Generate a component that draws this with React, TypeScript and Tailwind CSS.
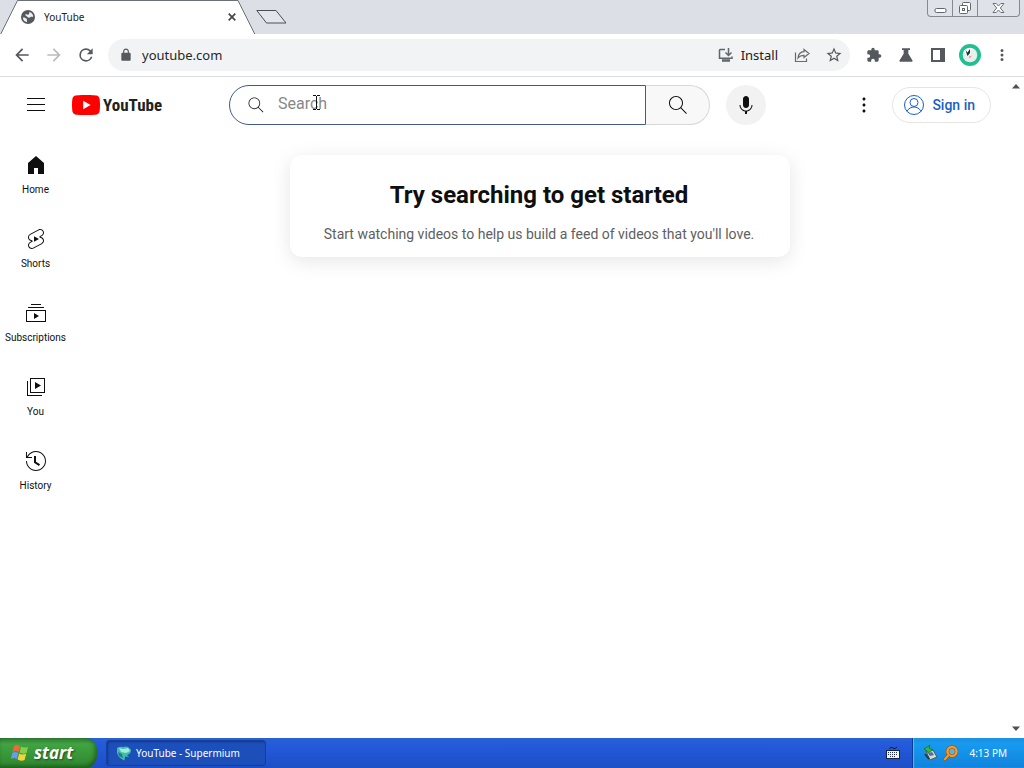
import React, { type ReactNode } from "react";

const ui = "font-['Noto_Sans',sans-serif]";

function Globe() {
  return (
    <svg width="14" height="14" viewBox="0 0 14 14" aria-hidden="true">
      <circle cx="7" cy="7" r="7" fill="#55595e" />
      <path d="M1.800 7.500c1.700 0 3 .3 3.800 1.200.7.800.2 2.100.4 3.500A5.300 5.300 0 0 1 1.800 7.500zM4.200 4.600C5.500 3.800 6.300 5 7.500 4.600c1-.4.300-1.700 1.200-2.600 2 .7 3.400 2.500 3.500 4.600-.9.700-2-.2-3 .7-.9.700-2.300.4-3-.5-.6-.8-2-.8-2-2.200z" fill="#eef0f2" />
    </svg>
  );
}

function TitleBar() {
  return (
    <div className="flex h-[34px] items-start bg-[#dcdfe6]">
      <div className="relative flex h-[34px] w-64 items-center pl-[21px] pr-[19px]">
        <svg className="absolute inset-0" width="256" height="34" viewBox="0 0 256 34" aria-hidden="true">
          <path d="M0.500 34.500L17.500 0.500H238L255 34.500" fill="#fff" stroke="#6b6f76" />
        </svg>
        <div className="relative flex w-full items-center">
          <Globe />
          <span className={`${ui} ml-[9px] flex-1 text-[10px] leading-4 text-[#222]`}>YouTube</span>
          <button aria-label="Close tab" className="flex h-4 w-[10px] items-center justify-center">
            <svg width="8" height="8" viewBox="0 0 8 8"><path d="M.7.7l6.600 6.600M7.300.7L.7 7.300" stroke="#44474b" strokeWidth="1.700" /></svg>
          </button>
        </div>
      </div>
      <button aria-label="New tab" className="mt-[9px]">
        <svg width="31" height="15" viewBox="0 0 31 15" className="block"><path d="M.8 1.500H20L30 14H10.500z" fill="#e2e5ea" stroke="#4b4e54" /></svg>
      </button>
      <div className="ml-auto mr-1 flex h-[17px] rounded-b border border-t-0 border-[#858a92] bg-[#dfe2e8]">
        <button aria-label="Minimize" className="flex w-[25px] items-center justify-center border-r border-[#858a92]">
          <svg width="13" height="16" viewBox="0 0 13 16"><rect x="1" y="8.500" width="11" height="4" rx="1.500" fill="#fff" stroke="#62666d" /></svg>
        </button>
        <button aria-label="Restore" className="flex w-[25px] items-center justify-center border-r border-[#858a92]">
          <svg width="14" height="16" viewBox="0 0 14 16" fill="#fff" stroke="#62666d"><rect x="4.500" y="2.500" width="8" height="8" rx="1" /><rect x="1.500" y="5.500" width="8" height="8" rx="1" /><rect x="4.500" y="8.500" width="2" height="2" /></svg>
        </button>
        <button aria-label="Close" className="flex w-[41px] items-center justify-center">
          <svg width="13" height="16" viewBox="0 0 13 16"><path d="M1 3.500h3.200L6.500 6l2.300-2.500H12L8.300 8l3.700 4.500H8.800L6.500 10l-2.300 2.500H1L4.700 8z" fill="#fff" stroke="#6c7077" /></svg>
        </button>
      </div>
    </div>
  );
}

function IconButton({ label, children, className = "" }: { label: string; children: ReactNode; className?: string }) {
  return (
    <button aria-label={label} className={`flex h-8 w-8 shrink-0 items-center justify-center ${className}`}>{children}</button>
  );
}

function M({ d, size = 18, color = "#55585d" }: { d: string; size?: number; color?: string }) {
  return <svg width={size} height={size} viewBox="0 0 24 24" fill={color}><path d={d} /></svg>;
}

function Toolbar() {
  return (
    <div className="flex h-[43px] items-center border-b border-[#dadce0] bg-white pl-[6px] pr-[6px]">
      <IconButton label="Back"><M size={20} d="M20 11H7.830l5.590-5.590L12 4l-8 8 8 8 1.410-1.410L7.830 13H20v-2z" /></IconButton>
      <IconButton label="Forward"><M size={20} color="#babcbe" d="M12 4l-1.410 1.410L16.170 11H4v2h12.170l-5.580 5.590L12 20l8-8z" /></IconButton>
      <IconButton label="Reload"><M size={20} d="M17.650 6.350A7.960 7.960 0 0 0 12 4a8 8 0 1 0 7.730 10h-2.080A6 6 0 1 1 12 6c1.660 0 3.140.69 4.220 1.780L13 11h7V4l-2.350 2.350z" /></IconButton>
      <div className="ml-[6px] flex h-8 min-w-0 flex-1 items-center rounded-full bg-[#f1f3f4] pl-[11px]">
        <M size={14} d="M18 8h-1V6c0-2.760-2.240-5-5-5S7 3.240 7 6v2H6c-1.100 0-2 .9-2 2v10c0 1.100.9 2 2 2h12c1.100 0 2-.9 2-2V10c0-1.100-.9-2-2-2zM9 8V6c0-1.660 1.340-3 3-3s3 1.340 3 3v2H9z" />
        <input aria-label="Address" defaultValue="youtube.com" className={`${ui} ml-[9px] min-w-0 flex-1 bg-transparent pb-px text-[13px] leading-5 text-[#25282b] outline-none`} />
        <button className={`${ui} mr-[8px] flex items-center gap-[7px] text-[13px] leading-5 text-[#202124]`}>
          <svg width="16" height="16" viewBox="0 0 16 16" fill="none" stroke="#62656a" strokeWidth="1.500"><path d="M7 2.500H2.200Q1.500 2.500 1.500 3.200v8.100h12.500V9.500" /><path d="M10.500 1v7M7.500 5.500l3 3 3-3" /><path d="M4 13.500h8" strokeWidth="2.500" /></svg>
          Install
        </button>
        <IconButton label="Share">
          <svg width="17" height="17" viewBox="0 0 17 17" fill="none" stroke="#66696e" strokeWidth="1.200"><path d="M1.500 5.500v9h11v-3" /><path d="M10 2.500l5 4-5 4V8.300C7.500 8.300 5.600 9 4 11c.3-3.500 2.500-6 6-6.300z" /></svg>
        </IconButton>
        <IconButton label="Bookmark"><M d="M22 9.240l-7.190-.62L12 2 9.190 8.630 2 9.240l5.460 4.730L5.820 21 12 17.270 18.180 21l-1.630-7.030L22 9.240zM12 15.400l-3.760 2.270 1-4.280-3.320-2.880 4.380-.38L12 6.100l1.710 4.040 4.380.38-3.320 2.880 1 4.280L12 15.400z" /></IconButton>
      </div>
      <IconButton label="Extensions" className="ml-[8px]"><M size={16} d="M20.500 11H19V7c0-1.100-.9-2-2-2h-4V3.500a2.500 2.500 0 0 0-5 0V5H4c-1.100 0-2 .9-2 2v3.800h1.500c1.490 0 2.700 1.210 2.700 2.700s-1.210 2.700-2.700 2.700H2V20c0 1.100.9 2 2 2h3.800v-1.500c0-1.490 1.210-2.700 2.700-2.700s2.700 1.210 2.700 2.700V22H17c1.100 0 2-.9 2-2v-4h1.500a2.500 2.500 0 0 0 0-5z" /></IconButton>
      <IconButton label="Labs"><M size={16} d="M6 2h12v2.500h-2.500V10l6.300 10.200c.5.900-.1 1.800-1.100 1.800H3.300c-1 0-1.600-.9-1.100-1.800L8.500 10V4.500H6z" /></IconButton>
      <IconButton label="Side panel"><svg width="14" height="14" viewBox="0 0 14 14"><path d="M1 1h12v12H1z" fill="#fff" stroke="#55585d" strokeWidth="2" /><path d="M9 0h5v14H9z" fill="#55585d" /></svg></IconButton>
      <IconButton label="Profile">
        <svg width="22" height="22" viewBox="0 0 22 22"><circle cx="11" cy="11" r="11" fill="#1fbf92" /><circle cx="11" cy="11" r="7.300" fill="#e7efed" /><path d="M4.500 7q4-4 9-2l-3 2 2 4-5-1z" fill="#fff" /><path d="M6.500 6l2 2.500L11 5v4l-2.500 3z" fill="#15332d" /><path d="M10 12.500l3-1-2.500 3z" fill="#ef8d88" /></svg>
      </IconButton>
      <IconButton label="Browser menu"><M d="M12 8a2 2 0 1 0 0-4 2 2 0 0 0 0 4zm0 2a2 2 0 1 0 0 4 2 2 0 0 0 0-4zm0 6a2 2 0 1 0 0 4 2 2 0 0 0 0-4z" /></IconButton>
    </div>
  );
}

const searchPath = "M20.870 20.170l-5.590-5.590C16.350 13.350 17 11.750 17 10c0-3.870-3.130-7-7-7s-7 3.130-7 7 3.130 7 7 7c1.750 0 3.350-.65 4.580-1.710l5.590 5.590.7-.71zM10 16c-3.310 0-6-2.690-6-6s2.690-6 6-6 6 2.690 6 6-2.690 6-6 6z";

function Masthead() {
  return (
    <header className="flex h-14 items-center pr-[17px]">
      <div className="flex w-[229px] shrink-0 items-center pl-6">
        <button aria-label="Guide">
          <svg width="24" height="24" viewBox="0 0 24 24"><path d="M21 6H3V5h18v1zm0 5H3v1h18v-1zm0 6H3v1h18v-1z" fill="#0f0f0f" /></svg>
        </button>
        <a href="#" className="ml-6 flex items-center">
          <svg width="28" height="20" viewBox="0 0 28 20" aria-hidden="true"><path d="M27.400 3.100A3.600 3.600 0 0 0 24.900.6C22.700 0 14 0 14 0S5.300 0 3.100.6A3.600 3.600 0 0 0 .6 3.100C0 5.300 0 10 0 10s0 4.700.6 6.900a3.600 3.600 0 0 0 2.500 2.500C5.300 20 14 20 14 20s8.700 0 10.900-.6a3.600 3.600 0 0 0 2.500-2.500C28 14.700 28 10 28 10s0-4.700-.6-6.900z" fill="#f00" /><path d="M11.200 14.300V5.700l7.400 4.300z" fill="#fff" /></svg>
          <span className="ml-[3px] font-['Roboto_Condensed','Roboto',sans-serif] text-[17px] font-bold leading-5 text-[#212121]">YouTube</span>
        </a>
      </div>
      <form className="flex min-w-0 max-w-[481px] flex-1" onSubmit={(e) => e.preventDefault()}>
        <label className="relative flex h-10 min-w-0 flex-1 items-center rounded-l-full border border-[#40598f] bg-white pl-4">
          <M size={20} color="#202020" d={searchPath} />
          <input aria-label="Search" placeholder="Search" className="ml-3 min-w-0 flex-1 bg-transparent pb-[2px] font-['Roboto',sans-serif] text-base leading-6 text-[#111] outline-none placeholder:text-[#888]" />
          <svg className="absolute left-[83px] top-[9px]" width="8" height="15" viewBox="0 0 8 15" aria-hidden="true"><path d="M0 .5h3M4 .5h3M0 14.500h3M4 14.500h3M3.500 1v13" stroke="#111" /></svg>
        </label>
        <button aria-label="Submit search" className="flex h-10 w-16 items-center justify-center rounded-r-full border border-l-0 border-[#d8d8d8] bg-[#f8f8f8]">
          <M size={24} color="#0f0f0f" d={searchPath} />
        </button>
      </form>
      <button aria-label="Search with your voice" className="ml-4 flex h-10 w-10 shrink-0 items-center justify-center rounded-full bg-[#f2f2f2]">
        <M size={24} color="#0f0f0f" d="M12 3c-1.660 0-3 1.370-3 3.070v5.860c0 1.700 1.340 3.070 3 3.070s3-1.370 3-3.070V6.070C15 4.370 13.660 3 12 3zm6.500 9h-1c0 3.030-2.470 5.500-5.500 5.500S6.500 15.030 6.500 12h-1c0 3.240 2.390 5.930 5.500 6.410V21h2v-2.590c3.110-.48 5.500-3.170 5.500-6.410z" />
      </button>
      <div className="ml-auto flex shrink-0 items-center gap-4 pl-4">
        <button aria-label="Settings">
          <M size={24} color="#0f0f0f" d="M12 16.500c.83 0 1.500.67 1.500 1.500s-.67 1.500-1.500 1.500-1.500-.67-1.500-1.500.67-1.500 1.500-1.500zM10.500 12c0 .83.67 1.500 1.500 1.500s1.500-.67 1.500-1.500-.67-1.500-1.500-1.500-1.500.67-1.500 1.500zm0-6c0 .83.67 1.500 1.500 1.500s1.500-.67 1.500-1.500-.67-1.500-1.500-1.500-1.500.67-1.500 1.500z" />
        </button>
        <a href="#" className="flex h-9 items-center gap-[6px] rounded-full border border-[#e5e5e5] pl-[9px] pr-[15px] font-['Roboto',sans-serif] text-sm font-medium text-[#1a5fc4]">
          <svg width="24" height="24" viewBox="0 0 24 24" fill="none" stroke="#1a5fc4" aria-hidden="true"><circle cx="12" cy="12" r="9.500" /><circle cx="12" cy="9.500" r="4" /><path d="M5 18.500c1.500-3.300 4.500-4.500 7-4.500s5.500 1.200 7 4.500" /></svg>
          Sign in
        </a>
      </div>
    </header>
  );
}

const nav: { label: string; d: string }[] = [
  { label: "Home", d: "M4 21V10.080l8-6.960 8 6.960V21h-6v-6h-4v6H4z" },
  { label: "Shorts", d: "M10 14.650v-5.300L15 12l-5 2.650zm7.770-4.330c-.77-.32-1.200-.5-1.200-.5L18 9.060c1.840-.96 2.530-3.230 1.560-5.060s-3.240-2.530-5.070-1.560L6 6.940c-1.290.68-2.070 2.040-2 3.490.07 1.420.93 2.670 2.220 3.250.03.010 1.200.5 1.200.5L6 14.930c-1.830.97-2.530 3.240-1.560 5.070.97 1.830 3.240 2.530 5.070 1.560l8.500-4.500c1.290-.68 2.060-2.040 1.990-3.490-.07-1.420-.94-2.680-2.230-3.250zm-.23 5.860l-8.500 4.500c-1.340.71-3.010.2-3.720-1.140-.71-1.340-.2-3.010 1.140-3.720l2.040-1.080v-1.210l-.69-.28-1.110-.46c-.99-.41-1.650-1.350-1.700-2.410-.05-1.060.52-2.060 1.460-2.560l8.500-4.500c1.340-.71 3.010-.2 3.720 1.140.71 1.340.2 3.010-1.140 3.720L15.500 9.260v1.210l1.800.74c.99.41 1.650 1.350 1.700 2.410.05 1.060-.52 2.060-1.460 2.560z" },
  { label: "Subscriptions", d: "M10 18v-6l5 3-5 3zm7-15H7v1h10V3zm3 3H4v1h16V6zm2 3H2v12h20V9zM3 10h18v10H3V10z" },
  { label: "You", d: "M11 7l6 3.500L11 14V7zm7 13H4V6H3v15h15v-1zm3-2H6V3h15v15zM7 17h13V4H7v13z" },
  { label: "History", d: "M14.970 16.950L10 13.870V7h2v5.760l4.030 2.490-1.060 1.700zM22 12c0 5.510-4.490 10-10 10S2 17.510 2 12h1c0 4.960 4.040 9 9 9s9-4.040 9-9-4.040-9-9-9C8.810 3 5.920 4.640 4.280 7.380c-.11.18-.22.370-.31.560L3.940 8H8v1H1.960V3h1v4.740c.04-.09.07-.17.110-.25.110-.22.230-.42.350-.63C5.220 3.860 8.510 2 12 2c5.510 0 10 4.490 10 10z" },
];

function Page() {
  return (
    <div className="flex min-h-0 flex-1 bg-white">
      <div className="flex min-w-0 flex-1 flex-col">
        <Masthead />
        <div className="flex flex-1">
          <nav className="w-[72px] shrink-0 pt-1">
            {nav.map((n) => (
              <a key={n.label} href="#" className="flex h-[74px] flex-col items-center gap-[6px] pt-4 pr-px font-['Roboto',sans-serif] text-[10px] leading-[14px] text-[#0f0f0f]">
                <M size={24} color="#0f0f0f" d={n.d} />
                <span>{n.label}</span>
              </a>
            ))}
          </nav>
          <main className="flex min-w-0 flex-1 items-start justify-center px-4 pt-[22px]">
            <section className="w-full max-w-[500px] rounded-xl bg-white pb-3 pl-6 pr-[26px] pt-6 text-center font-['Roboto',sans-serif] shadow-[0_4px_20px_rgba(0,0,0,0.1)]">
              <h1 className="text-2xl font-bold leading-8 text-[#0f0f0f]">Try searching to get started</h1>
              <p className="mt-3 text-sm leading-[22px] text-[#606060]">Start watching videos to help us build a feed of videos that you'll love.</p>
            </section>
          </main>
        </div>
      </div>
      <div className="flex w-4 shrink-0 flex-col items-center justify-between py-[6px]">
        <button aria-label="Scroll up"><svg width="8" height="6" viewBox="0 0 8 6" className="block"><path d="M0 5.500L4 1l4 4.500z" fill="#505050" /></svg></button>
        <button aria-label="Scroll down"><svg width="8" height="6" viewBox="0 0 8 6" className="block"><path d="M0 .5L4 5l4-4.500z" fill="#505050" /></svg></button>
      </div>
    </div>
  );
}

function Taskbar() {
  return (
    <footer className={`${ui} flex h-[30px] shrink-0 items-stretch bg-linear-to-b from-[#2a62cf] via-[#245bdb] via-20% to-[#1d4fc6] text-[10px] text-white`}>
      <button className="flex w-[97px] items-center gap-[5px] rounded-r-xl bg-linear-to-b from-[#2f7a32] via-[#41a341] via-20% to-[#2f862f] pl-[11px] font-['Open_Sans',sans-serif] text-[17px] font-bold italic leading-5 shadow-[inset_-2px_-2px_4px_rgba(0,50,0,0.5)] [text-shadow:1px_1px_2px_#174d17]">
        <svg width="18" height="18" viewBox="0 0 18 18" aria-hidden="true"><path d="M3 2q3-2 6 0L7.500 8q-3-2-6 0z" fill="#ed6a38" /><path d="M10 2.500q3 2 7 .2L15.500 9q-4 1.500-7-.5z" fill="#83cf4d" /><path d="M1.300 9q3-2 6 0L5.800 15q-3-2-6 0z" fill="#669df0" /><path d="M8.200 9.500q3 2 7 .3L13.600 16q-4 1.500-7-.5z" fill="#f5d33d" /></svg>
        start
      </button>
      <button className="my-[2px] ml-[9px] flex w-40 items-center gap-[4px] rounded-[3px] border border-[#173f9d] bg-[#1c4fba] pl-[9px] shadow-[inset_1px_1px_2px_#123783]">
        <svg width="16" height="16" viewBox="0 0 16 16" aria-hidden="true"><path d="M1 3q3-2 6-1 5-2 8 3 0 4-4 5l2 2-4-.5-.5 4Q2 13 1 8z" fill="#42bdaa" /><path d="M3 3l4 1 5-1 2 3-4 2-5-1z" fill="#9eecdb" /><path d="M2 7l4 2 1 4-4-2z" fill="#207c8b" /></svg>
        YouTube - Supermium
      </button>
      <div className="ml-auto flex items-center pr-3">
        <svg width="14" height="14" viewBox="0 0 14 14" aria-label="Keyboard"><path d="M3 3q2-3 4-1t4-1" fill="none" stroke="#0d1c3f" /><rect x=".5" y="4.500" width="13" height="8" fill="#f6f2dd" stroke="#172443" /><path d="M2 6.500h10M2 8.500h10M4 10.500h6" stroke="#26324a" strokeDasharray="1 1" /></svg>
      </div>
      <div className="flex items-center border-l border-[#0b3b94] bg-linear-to-b from-[#1a8ee0] via-[#169aef] via-20% to-[#1283dc] pl-[10px] pr-[17px] shadow-[inset_1px_0_1px_#4cc0fa]">
        <svg width="15" height="16" viewBox="0 0 15 16" aria-hidden="true"><path d="M3 6l7-1 4 7-7 3z" fill="#d5dbd2" stroke="#4a5861" /><path d="M5 8l4-1 2 3-4 1z" fill="#486db5" /><path d="M1 4l6-4-1 3 4 2-5 3-1-2z" fill="#36b63d" stroke="#145c25" strokeWidth=".6" /><path d="M2 9l4 5" stroke="#273b35" strokeWidth="2" /></svg>
        <svg className="ml-1" width="17" height="17" viewBox="0 0 17 17" aria-hidden="true"><circle cx="10" cy="6.500" r="4.500" fill="#5db3df" stroke="#87501b" strokeWidth="3.500" /><circle cx="10" cy="6.500" r="4.500" fill="none" stroke="#f39a2b" strokeWidth="2.500" /><path d="M6.500 10L2 15.500" stroke="#87501b" strokeWidth="3.500" /><path d="M6.500 10L2.300 15" stroke="#f39a2b" strokeWidth="2.200" /></svg>
        <span className="ml-[10px]">4:13 PM</span>
      </div>
    </footer>
  );
}

export default function App() {
  return (
    <div className="flex min-h-screen flex-col bg-white">
      <TitleBar />
      <Toolbar />
      <Page />
      <Taskbar />
    </div>
  );
}
